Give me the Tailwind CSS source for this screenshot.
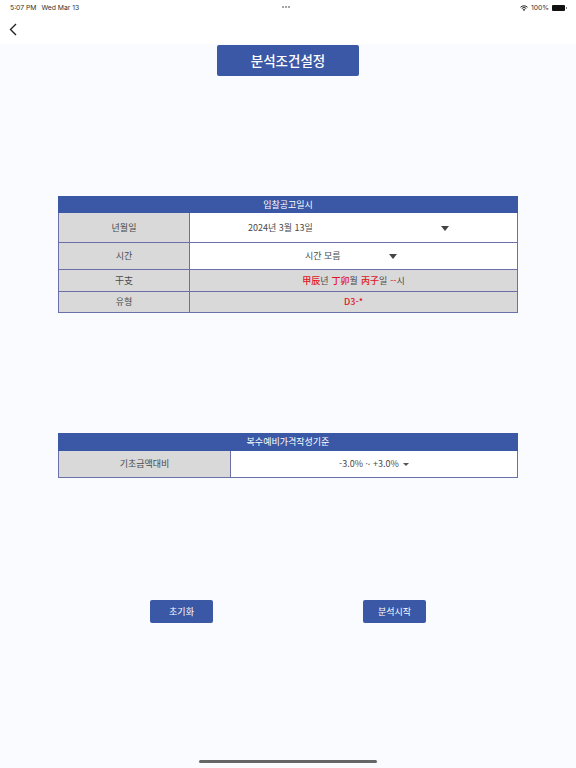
<!DOCTYPE html>
<html lang="ko">
<head>
<meta charset="UTF-8">
<title>분석조건설정</title>
<script src="https://cdn.jsdelivr.net/npm/@tailwindcss/browser@4"></script>
</head>
<body class="bg-[#fafbfe] font-['Noto_Sans_CJK_KR','Noto_Sans',sans-serif] text-[#4a4a4a]">
<div class="relative h-[768px] w-[576px] overflow-hidden">
  <!-- status bar + nav -->
  <header class="h-[44px] bg-white">
    <div class="relative flex h-[14px] items-center justify-between pl-[10px] pr-[9px] pt-[2px] font-['Inter',sans-serif] text-[6.800px] text-[#333]">
      <div class="flex gap-[5px]"><span>5:07 PM</span><span>Wed Mar 13</span></div>
      <div class="absolute left-[282px] top-[6px] flex gap-[1px]">
        <span class="size-[2px] rounded-full bg-[#888]"></span><span class="size-[2px] rounded-full bg-[#888]"></span><span class="size-[2px] rounded-full bg-[#888]"></span>
      </div>
      <div class="flex items-center gap-[3px]">
        <svg width="8" height="6" viewBox="0 0 16 12" fill="none" stroke="#222" stroke-width="2"><path d="M1 4.500a10 10 0 0 1 14 0M3.500 7a6.500 6.500 0 0 1 9 0"/><path d="M8 12 5.500 9.500a3.500 3.500 0 0 1 5 0z" fill="#222" stroke="none"/></svg>
        <span>100%</span>
        <span class="flex items-center gap-[1px]"><span class="h-[6px] w-[13px] rounded-[1px] bg-[#111]"></span><span class="h-[2px] w-[1px] bg-[#777]"></span></span>
      </div>
    </div>
    <div class="pl-[9px] pt-[9px]">
      <svg width="8" height="13" viewBox="0 0 8 13" fill="none" stroke="#222" stroke-width="1.400"><path d="M7 1 1.500 6.500 7 12"/></svg>
    </div>
  </header>

  <main class="flex flex-col items-center pt-[1px]">
    <div class="flex h-[31px] w-[142px] items-center justify-center rounded-[2px] bg-[#3a58a6] text-[13.500px] font-medium text-white">분석조건설정</div>

    <!-- 입찰공고일시 -->
    <section class="mt-[120px] w-[460px] text-[9px]">
      <div class="flex h-[17px] items-center justify-center bg-[#3a58a6] text-white">입찰공고일시</div>
      <div class="grid grid-cols-[131px_1fr] grid-rows-[30px_27px_22px_20px] border-x border-b border-[#6c70a8]">
        <div class="flex items-center justify-center border-r border-b border-[#6c70a8] bg-[#d9d9d9]">년월일</div>
        <div class="relative flex items-center border-b border-[#6c70a8] bg-white pl-[58px]">
          2024년 3월 13일
          <span class="absolute left-[251px] top-[13px] h-0 w-0 border-x-[4px] border-t-[5px] border-x-transparent border-t-[#444]"></span>
        </div>
        <div class="flex items-center justify-center border-r border-b border-[#6c70a8] bg-[#d9d9d9]">시간</div>
        <div class="relative flex items-center border-b border-[#6c70a8] bg-white pl-[115px]">
          시간 모름
          <span class="absolute left-[199px] top-[11px] h-0 w-0 border-x-[4px] border-t-[5px] border-x-transparent border-t-[#444]"></span>
        </div>
        <div class="flex items-center justify-center border-r border-b border-[#6c70a8] bg-[#d9d9d9]">干支</div>
        <div class="flex items-center justify-center gap-[3px] border-b border-[#6c70a8] bg-[#d9d9d9]">
          <span><span class="font-medium text-[#e0141c]">甲辰</span>년</span>
          <span><span class="font-medium text-[#e0141c]">丁卯</span>월</span>
          <span><span class="font-medium text-[#e0141c]">丙子</span>일</span>
          <span><span class="text-[#e0141c]">--</span>시</span>
        </div>
        <div class="flex items-center justify-center border-r border-[#6c70a8] bg-[#d9d9d9]">유형</div>
        <div class="flex items-center justify-center bg-[#d9d9d9] font-medium text-[#e0141c]">D3-*</div>
      </div>
    </section>

    <!-- 복수예비가격작성기준 -->
    <section class="mt-[120px] w-[460px] text-[9px]">
      <div class="flex h-[18px] items-center justify-center bg-[#3a58a6] text-white">복수예비가격작성기준</div>
      <div class="grid h-[27px] grid-cols-[172px_1fr] border-x border-b border-[#6c70a8]">
        <div class="flex items-center justify-center border-r border-[#6c70a8] bg-[#d9d9d9]">기초금액대비</div>
        <div class="flex items-center justify-center gap-[4px] bg-white">
          -3.0% ~ +3.0%
          <span class="h-0 w-0 border-x-[3px] border-t-[3px] border-x-transparent border-t-[#555]"></span>
        </div>
      </div>
    </section>

    <div class="mt-[122px] flex w-[276px] justify-between text-[9px] text-white">
      <button class="h-[23px] w-[63px] rounded-[2px] bg-[#3a58a6]">초기화</button>
      <button class="h-[23px] w-[63px] rounded-[2px] bg-[#3a58a6]">분석시작</button>
    </div>
  </main>

  <div class="absolute bottom-[5px] left-[199px] h-[3px] w-[178px] rounded-full bg-[#666]"></div>
</div>
</body>
</html>
